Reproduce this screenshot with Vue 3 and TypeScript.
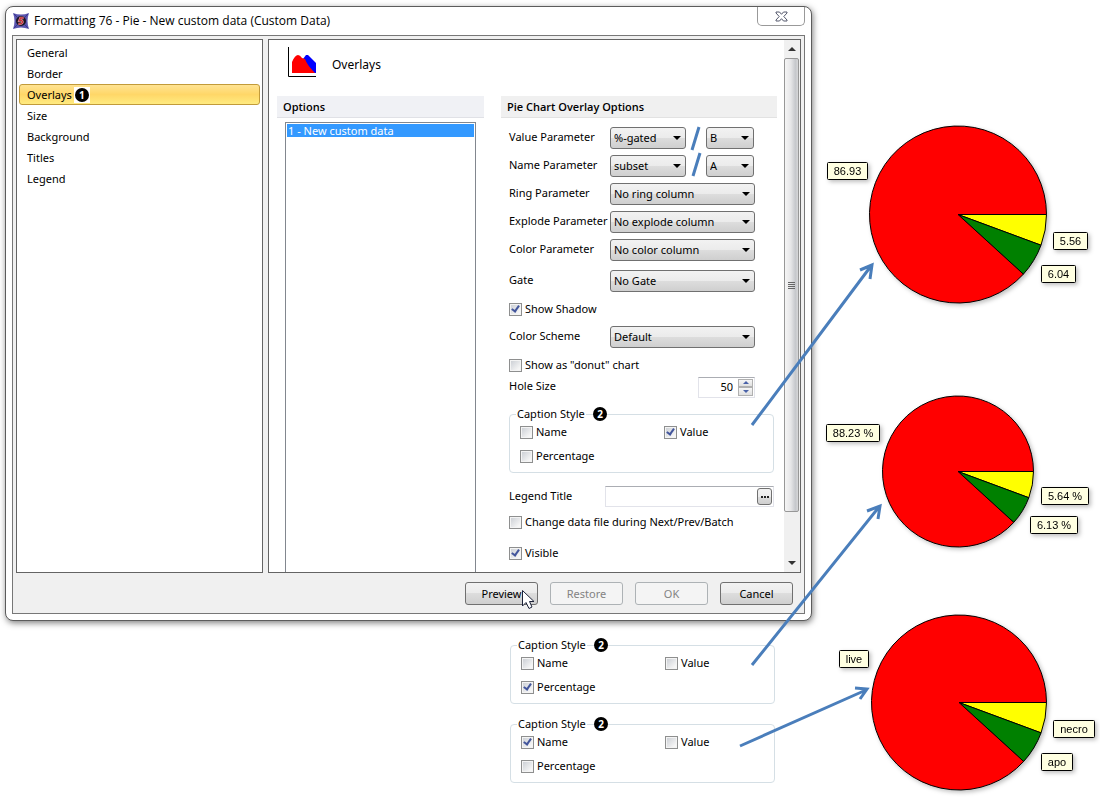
<script setup lang="ts">
import { ref, reactive } from 'vue'

interface Slice { color: string; value: number }
interface Tip { text: string; x: number; y: number; w: number }
interface Chart { id: string; height: number; cx: number; cy: number; r: number; tips: Tip[] }
interface CaptionState { name: boolean; value: boolean; percentage: boolean }

const pages = ['General', 'Border', 'Overlays', 'Size', 'Background', 'Titles', 'Legend']
const currentPage = ref('Overlays')

const form = reactive({
  valueParam: '%-gated', valueSource: 'B',
  nameParam: 'subset', nameSource: 'A',
  ring: 'No ring column', explode: 'No explode column', color: 'No color column',
  gate: 'No Gate', scheme: 'Default',
  shadow: true, donut: false, hole: '50', legendTitle: '', changeFile: false, visible: true,
})

const captions = reactive<CaptionState[]>([
  { name: false, value: true, percentage: false },
  { name: false, value: false, percentage: true },
  { name: true, value: false, percentage: false },
])

const columnRows = [
  { key: 'ring', label: 'Ring Parameter', cls: 'row-ring' },
  { key: 'explode', label: 'Explode Parameter', cls: 'row-explode' },
  { key: 'color', label: 'Color Parameter', cls: 'row-color' },
  { key: 'gate', label: 'Gate', cls: 'row-gate' },
] as const

const slices: Slice[] = [
  { color: '#ffff00', value: 5.56 },
  { color: '#008000', value: 6.04 },
  { color: '#ff0000', value: 86.93 },
]

const charts: Chart[] = [
  { id: 'value', height: 200, cx: 138, cy: 104.5, r: 88.5, tips: [
    { text: '86.93', x: 7, y: 53, w: 41 }, { text: '5.56', x: 233, y: 123, w: 35 }, { text: '6.04', x: 221, y: 156, w: 35 }] },
  { id: 'percentage', height: 180, cx: 138, cy: 91.5, r: 75.5, tips: [
    { text: '88.23 %', x: 6, y: 45, w: 54 }, { text: '5.64 %', x: 221, y: 108, w: 48 }, { text: '6.13 %', x: 210, y: 137, w: 48 }] },
  { id: 'name', height: 197, cx: 139, cy: 102.5, r: 87.5, tips: [
    { text: 'live', x: 19, y: 51, w: 30 }, { text: 'necro', x: 233, y: 121, w: 42 }, { text: 'apo', x: 221, y: 154, w: 32 }] },
]

function wedges(c: Chart): { d: string; color: string }[] {
  const total = slices.reduce((sum, s) => sum + s.value, 0)
  let angle = 0
  return slices.map((s) => {
    const start = angle
    angle += (s.value / total) * Math.PI * 2
    const x1 = c.cx + c.r * Math.cos(start)
    const y1 = c.cy + c.r * Math.sin(start)
    const x2 = c.cx + c.r * Math.cos(angle)
    const y2 = c.cy + c.r * Math.sin(angle)
    const large = angle - start > Math.PI ? 1 : 0
    return { color: s.color, d: `M${c.cx} ${c.cy}L${x1} ${y1}A${c.r} ${c.r} 0 ${large} 1 ${x2} ${y2}Z` }
  })
}

function step(delta: number) {
  form.hole = String(Number(form.hole) + delta)
}
</script>

<template>
  <main class="page">
    <div class="left">
      <section class="dialog" role="dialog" aria-labelledby="dialog-title">
        <header class="titlebar">
          <svg class="app-icon" viewBox="0 0 16 16" aria-hidden="true">
            <path d="M0 0Q8 3 16 0Q13 8 16 16Q8 13 0 16Q3 8 0 0Z" fill="#5a55ae" />
            <path d="M1 1L4 4M15 1L12 4M1 15L4 12M15 15L12 12" stroke="#3a3590" />
            <circle cx="8" cy="8" r="5" fill="#1c1426" />
            <path d="M10.500 5H7.500L6.500 7.500Q9.800 7 9.500 9.300Q9 11.200 5.500 10.800" fill="none" stroke="#e8a0a0" stroke-width="2.400" />
            <path d="M10.500 5H7.500L6.500 7.500Q9.800 7 9.500 9.300Q9 11.200 5.500 10.800" fill="none" stroke="#c4303c" stroke-width="1.300" />
          </svg>
          <h1 id="dialog-title">Formatting 76 - Pie - New custom data (Custom Data)</h1>
          <button class="close" type="button" aria-label="Close">
            <svg viewBox="0 0 13 11" aria-hidden="true">
              <path d="M1 1H4.500L6.500 3.300L8.500 1H12V2L8.800 5.500L12 9V10H8.500L6.500 7.700L4.500 10H1V9L4.200 5.500L1 2Z" fill="#fff" stroke="#54586c" />
            </svg>
          </button>
        </header>

        <div class="frame">
          <div class="panes">
            <nav class="sidebar">
              <button v-for="p in pages" :key="p" type="button" class="nav-item" :class="{ active: p === currentPage }" @click="currentPage = p">
                {{ p }}
                <span v-if="p === 'Overlays'" class="nav-mark"><span class="badge">1</span></span>
              </button>
            </nav>

            <div class="panel">
              <div class="content">
                <div class="heading">
                  <svg class="overlay-icon" viewBox="0 0 28 30" aria-hidden="true">
                    <path d="M15 12L18 8H20L28 16V26H24Z" fill="#0000ff" />
                    <path d="M4 26V15Q7 8 10 8Q12 8 14 11L17 12Q19 18 27 26Z" fill="#ff0000" />
                    <path d="M.5 0V29.500H28" fill="none" stroke="#000" />
                  </svg>
                  <h2>Overlays</h2>
                </div>

                <div class="columns">
                  <section class="options">
                    <h3 class="band">Options</h3>
                    <ul class="list"><li>1 - New custom data</li></ul>
                  </section>

                  <section class="settings">
                    <h3 class="band neutral">Pie Chart Overlay Options</h3>
                    <form class="form" @submit.prevent>
                      <div class="row">
                        <label for="value-param">Value Parameter</label>
                        <span class="select medium"><select id="value-param" v-model="form.valueParam"><option>%-gated</option></select></span>
                        <span class="select short"><select v-model="form.valueSource" aria-label="Value source"><option>B</option></select></span>
                      </div>
                      <div class="row">
                        <label for="name-param">Name Parameter</label>
                        <span class="select medium"><select id="name-param" v-model="form.nameParam"><option>subset</option></select></span>
                        <span class="select short"><select v-model="form.nameSource" aria-label="Name source"><option>A</option></select></span>
                      </div>
                      <div v-for="r in columnRows" :key="r.key" class="row" :class="r.cls">
                        <label :for="r.key">{{ r.label }}</label>
                        <span class="select"><select :id="r.key" v-model="form[r.key]"><option>{{ form[r.key] }}</option></select></span>
                      </div>
                      <label class="check row-shadow"><input v-model="form.shadow" type="checkbox" />Show Shadow</label>
                      <div class="row row-scheme">
                        <label for="scheme">Color Scheme</label>
                        <span class="select"><select id="scheme" v-model="form.scheme"><option>Default</option></select></span>
                      </div>
                      <label class="check row-donut"><input v-model="form.donut" type="checkbox" />Show as "donut" chart</label>
                      <div class="row row-hole">
                        <label for="hole">Hole Size</label>
                        <span class="spinner">
                          <input id="hole" v-model="form.hole" type="text" />
                          <span class="steps">
                            <button type="button" aria-label="Increase" @click="step(1)"><i class="up"></i></button>
                            <button type="button" aria-label="Decrease" @click="step(-1)"><i class="down"></i></button>
                          </span>
                        </span>
                      </div>
                      <fieldset class="caption">
                        <legend>Caption Style</legend>
                        <span class="badge over">2</span>
                        <div class="caption-grid">
                          <label class="check"><input v-model="captions[0].name" type="checkbox" />Name</label>
                          <label class="check"><input v-model="captions[0].value" type="checkbox" />Value</label>
                          <label class="check"><input v-model="captions[0].percentage" type="checkbox" />Percentage</label>
                        </div>
                      </fieldset>
                      <div class="row row-legend">
                        <label for="legend-title">Legend Title</label>
                        <span class="title-box">
                          <input id="legend-title" v-model="form.legendTitle" type="text" />
                          <button type="button" aria-label="Edit legend title"><i></i><i></i><i></i></button>
                        </span>
                      </div>
                      <label class="check row-change"><input v-model="form.changeFile" type="checkbox" />Change data file during Next/Prev/Batch</label>
                      <label class="check row-visible"><input v-model="form.visible" type="checkbox" />Visible</label>
                    </form>
                  </section>
                </div>
              </div>
              <div class="scrollbar" aria-hidden="true">
                <span class="scroll-end"><i class="tri up"></i></span>
                <span class="thumb"><i></i><i></i><i></i><i></i></span>
                <span class="scroll-end bottom"><i class="tri down"></i></span>
              </div>
            </div>
          </div>

          <footer class="actions">
            <button type="button">Preview</button>
            <button type="button" disabled>Restore</button>
            <button type="button" disabled>OK</button>
            <button type="button">Cancel</button>
          </footer>
        </div>
      </section>

      <div class="variants">
        <fieldset v-for="i in [1, 2]" :key="i" class="caption">
          <legend>Caption Style</legend>
          <span class="badge over">2</span>
          <div class="caption-grid">
            <label class="check"><input v-model="captions[i].name" type="checkbox" />Name</label>
            <label class="check"><input v-model="captions[i].value" type="checkbox" />Value</label>
            <label class="check"><input v-model="captions[i].percentage" type="checkbox" />Percentage</label>
          </div>
        </fieldset>
      </div>
    </div>

    <div class="charts">
      <svg v-for="c in charts" :key="c.id" class="chart" :class="c.id" :viewBox="`0 0 280 ${c.height}`" role="img" :aria-label="`Pie chart by ${c.id}`">
        <g class="pie">
          <path v-for="w in wedges(c)" :key="w.color" :d="w.d" :fill="w.color" stroke="#000" stroke-linejoin="round" />
        </g>
        <g v-for="t in c.tips" :key="t.text" class="tip">
          <rect :x="t.x + 0.5" :y="t.y - 0.5" :width="t.w - 1" height="17" rx="1" fill="#ffffe1" stroke="#000" />
          <text :x="t.x + t.w / 2" :y="t.y + 12" text-anchor="middle">{{ t.text }}</text>
        </g>
      </svg>
    </div>

    <svg class="notes" viewBox="0 0 1100 797" preserveAspectRatio="none" aria-hidden="true">
      <g fill="none" stroke="#4a7ebb" stroke-width="3">
        <path d="M699 127L692 150M700 153L693 176" />
        <path d="M752 425L871 266M860 270L872 265L870 279" />
        <path d="M752 665L879 507M867 511L880 506L878 519" />
        <path d="M740 746L866 690M855 688L867 689L860 699" />
      </g>
      <path d="M522.500 590.500V606L526 602.500L529 608.500L532 607L529.500 601.500H534Z" fill="#fff" stroke="#1c2238" />
    </svg>
  </main>
</template>

<style>
body { margin: 0; background: #fff; }
</style>

<style scoped>
.page {
  position: relative;
  display: grid;
  grid-template-columns: minmax(0, 1fr) 288px;
  font: 11px/16px "Noto Sans", "Open Sans", sans-serif;
  color: #000;
}
.page * { box-sizing: border-box; }
button, input, select { font: inherit; color: inherit; margin: 0; }
.left { padding: 6px 0 0 5px; }
.dialog {
  border: 1px solid #5c5c5c;
  border-radius: 8px;
  padding: 0 6px 6px;
  background: #fff;
  box-shadow: 1px 2px 6px rgba(0, 0, 0, 0.5);
}
.titlebar { display: flex; align-items: flex-start; height: 28px; }
.app-icon { width: 16px; height: 16px; margin: 6px 5px 0 1px; }
h1 { flex: 1; margin: 5px 0 0; font-family: "Open Sans", "Noto Sans", sans-serif; font-size: 12px; font-weight: 400; line-height: 18px; white-space: nowrap; }
.close {
  display: flex; align-items: center; justify-content: center;
  width: 48px; height: 19px; padding: 0;
  background: #fff; border: 1px solid #999; border-top: 0; border-radius: 0 0 5px 5px;
}
.close svg { width: 13px; height: 11px; }
.frame { border: 1px solid #777; padding: 3px; background: #f0f0f0; }
.panes { display: flex; gap: 5px; }
.sidebar, .panel { background: #fff; border: 1px solid #646464; }
.sidebar { width: 247px; padding: 2px; }
.nav-item {
  display: flex; align-items: center; width: 100%; height: 21px; padding: 0 7px;
  background: none; border: 1px solid transparent; border-radius: 3px; text-align: left;
}
.nav-item.active { background: linear-gradient(#ffe392, #ffd768 50%, #ffeb80); border-color: #c29b3a; }
.nav-mark { display: flex; margin-left: 2px; background: #fff; padding: 1px; }
.badge {
  display: flex; align-items: center; justify-content: center; width: 14px; height: 14px;
  border-radius: 50%; background: #000; color: #fff; font-size: 10px; line-height: 14px; font-weight: 700;
}
.panel { flex: 1; min-width: 0; height: 534px; display: flex; overflow: hidden; }
.content { flex: 1; min-width: 0; padding: 0 7px 0 8px; display: flex; flex-direction: column; }
.heading { display: flex; gap: 16px; padding: 7px 0 0 11px; height: 56px; }
.overlay-icon { width: 28px; height: 30px; }
h2 { margin: 9px 0 0; font-size: 12px; font-weight: 400; line-height: 18px; }
.columns { flex: 1; display: grid; grid-template-columns: minmax(0, 3fr) minmax(0, 4fr); column-gap: 17px; }
.options { display: flex; flex-direction: column; }
.band { margin: 0; height: 22px; padding: 0 6px; line-height: 22px; font-family: "Open Sans", "Noto Sans", sans-serif; font-size: 11px; font-weight: 600; background: #f0f1f5; border-bottom: 1px solid #e0e1e6; white-space: nowrap; }
.neutral { background: #f0f0f0; border-color: #e2e2e2; }
.list { flex: 1; margin: 4px 8px 0; padding: 1px; list-style: none; border: 1px solid #82878f; border-bottom: 0; }
.list li { height: 13px; line-height: 13px; padding-left: 1px; background: #3399ff; color: #fff; }
.form { padding: 6px 3px 0 8px; }
.row { display: flex; align-items: center; height: 28px; padding-right: 19px; }
.row > label { flex: none; width: 101px; white-space: nowrap; margin-top: -2px; }
.row-ring { height: 27px; }
.row-explode { height: 30px; }
.row-color { height: 26px; }
.row-gate { height: 36px; }
.row-scheme { height: 35px; }
.row-hole { height: 22px; justify-content: space-between; }
.row-legend { height: 21px; margin-top: 13px; padding-right: 0; }
.row-legend > label { width: 96px; }
.select { position: relative; flex: 1; height: 22px; }
.select.medium { flex: none; width: 76px; }
.select.short { flex: none; width: 48px; margin-left: 20px; }
.select::after {
  content: ""; position: absolute; right: 5px; top: 9px;
  border: 4px solid transparent; border-top-color: #000; border-bottom: 0; pointer-events: none;
}
.select select {
  appearance: none; display: block; width: 100%; height: 22px; padding: 0 3px;
  border: 1px solid #707070; border-radius: 3px; outline: none;
  background: linear-gradient(#f2f2f2, #ebebeb 50%, #dddddd 50%, #cfcfcf);
}
.check { display: flex; align-items: center; height: 20px; gap: 3px; white-space: nowrap; }
.check input {
  appearance: none; position: relative; width: 13px; height: 13px;
  border: 1px solid #8e8f8f; background: linear-gradient(135deg, #c8ccd2, #f6f6f6 80%);
  box-shadow: inset 0 0 0 1px #f4f4f4;
}
.check input:checked::after {
  content: ""; position: absolute; left: 3px; top: 0; width: 3px; height: 6px;
  border: solid #43569c; border-width: 0 2px 2px 0; transform: rotate(35deg); box-sizing: content-box;
}
.row-donut { height: 22px; }
.row-change { margin-top: 5px; }
.row-visible { margin-top: 11px; }
.spinner { display: flex; width: 57px; height: 21px; padding: 1px; border: 1px solid #e2e3ea; border-top-color: #abadb3; }
.spinner input { width: 38px; padding: 0 5px; border: 0; outline: none; text-align: right; background: none; }
.steps { display: flex; flex-direction: column; width: 15px; }
.steps button { display: flex; align-items: center; justify-content: center; flex: 1; padding: 0; border: 1px solid #b0b0b0; background: linear-gradient(#f6f6f6, #e0e0e0); }
.steps i { border: 3px solid transparent; }
.steps .up { border-top: 0; border-bottom-color: #4a62a8; }
.steps .down { border-bottom: 0; border-top-color: #4a62a8; }
.caption { position: relative; margin: 8px 0 0; padding: 0 0 6px; min-width: 0; border: 1px solid #d5dfe5; border-radius: 4px; }
.caption legend { margin-left: 6px; padding: 0 1px; line-height: 16px; }
.badge.over { position: absolute; left: 83px; top: -15px; }
.caption-grid { display: grid; grid-template-columns: 144px 1fr; row-gap: 4px; padding-left: 10px; }
.title-box { display: flex; flex: 1; min-width: 0; height: 21px; padding: 1px; border: 1px solid #e2e3ea; border-top-color: #abadb3; }
.title-box input { flex: 1; min-width: 0; padding: 0 3px; border: 0; outline: none; background: none; }
.title-box button {
  display: flex; flex: none; align-items: center; justify-content: center; gap: 1px; width: 15px; padding: 0;
  border: 1px solid #707070; border-radius: 3px; background: linear-gradient(#f2f2f2, #ebebeb 50%, #dddddd 50%, #cfcfcf);
}
.title-box i { width: 2px; height: 2px; background: #222; }
.scrollbar { display: flex; flex-direction: column; width: 16px; background: #f0f0f0; }
.scroll-end { display: flex; align-items: center; justify-content: center; height: 18px; }
.scroll-end.bottom { margin-top: auto; }
.tri { border: 4px solid transparent; }
.tri.up { border-top: 0; border-bottom-color: #333; }
.tri.down { border-bottom: 0; border-top-color: #333; }
.thumb {
  display: flex; flex-direction: column; align-items: center; justify-content: center; gap: 1px;
  height: 454px; margin-right: 1px; border: 1px solid #979797; border-radius: 2px;
  background: linear-gradient(90deg, #f5f5f5, #e6e6e8 45%, #c6c8cc 80%, #d6d6d8);
}
.thumb i { width: 7px; height: 1px; background: #666; }
.actions { display: flex; justify-content: flex-end; gap: 12px; padding: 9px 8px 5px 0; }
.actions button {
  width: 73px; height: 23px; padding: 0; border: 1px solid #707070; border-radius: 3px;
  background: linear-gradient(#f2f2f2, #ebebeb 50%, #dddddd 50%, #cfcfcf);
}
.actions button:disabled { color: #838383; border-color: #adb2b5; background: #f4f4f4; }
.variants { display: flex; flex-direction: column; gap: 12px; width: 265px; margin: 16px 0 0 505px; }
.variants .caption { margin: 0; }
.charts { display: flex; flex-direction: column; padding: 110px 0 0 8px; }
.chart { display: block; width: 280px; }
.chart.value { height: 200px; margin-bottom: 70px; }
.chart.percentage { height: 180px; margin-bottom: 40px; }
.chart.name { height: 197px; }
.pie, .tip { filter: drop-shadow(2px 2px 2px rgba(0, 0, 0, 0.25)); }
.tip text { font: 11px "Liberation Sans", Arial, sans-serif; }
.notes { position: absolute; inset: 0; width: 100%; height: 797px; pointer-events: none; }
</style>
